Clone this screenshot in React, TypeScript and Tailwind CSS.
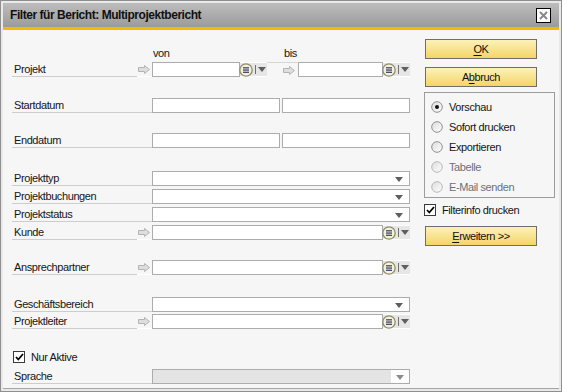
import type { ReactNode } from "react";

const Arrow = () => (
  <svg width="13" height="9" viewBox="0 0 13 9">
    <path d="M0.5 2.5H6.5V0.5L11.5 4.5L6.5 8.5V6.5H0.5Z" fill="#dedede" stroke="#b3b3b3" />
  </svg>
);

const Tri = ({ color = "#5f5f5f" }: { color?: string }) => (
  <svg width="8" height="5" viewBox="0 0 8 5">
    <path d="M0 0H8L4 5Z" fill={color} />
  </svg>
);

const ChooseIcon = () => (
  <svg width="14" height="14" viewBox="0 0 14 14">
    <circle cx="7" cy="7" r="6.2" fill="#f4f0da" stroke="#8f8b6c" strokeWidth="1.3" />
    <rect x="4" y="4.3" width="6" height="1.1" fill="#1b2a57" />
    <rect x="4" y="6.5" width="6" height="1.1" fill="#1b2a57" />
    <rect x="4" y="8.7" width="6" height="1.1" fill="#1b2a57" />
  </svg>
);

const Radio = ({ on, dim }: { on?: boolean; dim?: boolean }) => (
  <svg width="12" height="12" viewBox="0 0 12 12">
    <defs>
      <linearGradient id="rg" x1="0" y1="0" x2="1" y2="1">
        <stop offset="0" stopColor="#dcdcdc" />
        <stop offset="1" stopColor="#ffffff" />
      </linearGradient>
    </defs>
    <circle cx="6" cy="6" r="5.3" fill="url(#rg)" stroke={dim ? "#b8b8b8" : "#8f8f8f"} />
    {on && <circle cx="6" cy="6" r="2" fill="#111" />}
  </svg>
);

const Check = () => (
  <div className="w-[12px] h-[12px] border border-[#3a3a3a] bg-white flex items-center justify-center">
    <svg width="9" height="8" viewBox="0 0 9 8">
      <path d="M1 4L3.3 6.5L8 1" fill="none" stroke="#000" strokeWidth="1.8" />
    </svg>
  </div>
);

function Row({ label, arrow, children, className = "" }: { label: string; arrow?: boolean; children: ReactNode; className?: string }) {
  return (
    <div className={`flex h-[15px] ${className}`}>
      <div className="w-[125px] border-b border-[#cdcdcd] pl-[2px] flex items-center leading-none">{label}</div>
      <div className={`w-[15px] border-b flex items-center justify-center ${arrow ? "border-white" : "border-[#cdcdcd]"}`}>
        {arrow && <Arrow />}
      </div>
      <div className="flex-1 flex">{children}</div>
    </div>
  );
}

const Combo = () => (
  <div className="flex-1 bg-white border border-[#acacac] flex items-center justify-end pr-[6px] pt-[1px]">
    <Tri />
  </div>
);

const Cfl = ({ w }: { w?: string }) => (
  <div className={`flex ${w ?? "flex-1"}`}>
    <div className="flex-1 bg-white border border-[#acacac]" />
    <div className="w-[27px] bg-[#e6e6e6] border-y border-white flex items-center">
      <div className="-ml-[1px]">
        <ChooseIcon />
      </div>
      <div className="w-px h-[9px] bg-[#6f6f6f] ml-[2px]" />
      <div className="ml-[2px]">
        <Tri />
      </div>
    </div>
  </div>
);

const Btn = ({ children, className = "" }: { children: ReactNode; className?: string }) => (
  <div className={`w-[112px] h-[20px] ml-[1px] border border-[#6e6e6e] bg-gradient-to-b from-[#fdf1b8] to-[#f3d565] flex items-center justify-center text-[#111] ${className}`}>
    {children}
  </div>
);

export default function App() {
  return (
    <div className="w-[562px] h-[392px] border border-[#8f8f8f] bg-[#e9e9e9] p-[2px] font-['Liberation_Sans',Arial,sans-serif] text-[11px] tracking-[-0.4px] text-[#151515]">
      <div className="h-full flex flex-col border-b border-[#a5a5a5] bg-[#f6f6f6]">
        {/* title */}
        <div className="h-[24px] bg-gradient-to-b from-[#bdbdbd] to-[#9b9b9b] flex items-center justify-between pl-[7px] pr-[8px]">
          <span className="font-bold text-[12px] tracking-[-0.45px] text-[#111]">Filter für Bericht: Multiprojektbericht</span>
          <div className="w-[15px] h-[15px] bg-white border border-black flex items-center justify-center">
            <svg width="9" height="9" viewBox="0 0 9 9">
              <path d="M1 1L8 8M8 1L1 8" stroke="#8a8a8a" strokeWidth="2" />
            </svg>
          </div>
        </div>
        <div className="h-[3px] bg-[#f9b800]" />

        <div className="flex flex-1">
          {/* left form */}
          <div className="w-[407px] pl-[9px] flex flex-col">
            <div className="flex h-[14px] mt-[16px] leading-[14px]">
              <div className="w-[141px]" />
              <div className="w-[131px]">von</div>
              <div>bis</div>
            </div>
            <Row label="Projekt" arrow className="mt-[2px]">
              <Cfl w="w-[115px]" />
              <div className="w-[31px] border-t border-[#d6d6d6] flex items-center justify-end pr-[2px]">
                <Arrow />
              </div>
              <Cfl />
            </Row>
            <Row label="Startdatum" className="mt-[21px]">
              <div className="flex-1 bg-white border border-[#acacac]" />
              <div className="w-[2px]" />
              <div className="flex-1 bg-white border border-[#acacac]" />
            </Row>
            <Row label="Enddatum" className="mt-[20px]">
              <div className="flex-1 bg-white border border-[#acacac]" />
              <div className="w-[2px]" />
              <div className="flex-1 bg-white border border-[#acacac]" />
            </Row>
            <Row label="Projekttyp" className="mt-[23px]">
              <Combo />
            </Row>
            <Row label="Projektbuchungen" className="mt-[3px]">
              <Combo />
            </Row>
            <Row label="Projektstatus" className="mt-[3px]">
              <Combo />
            </Row>
            <Row label="Kunde" arrow className="mt-[3px]">
              <Cfl />
            </Row>
            <Row label="Ansprechpartner" arrow className="mt-[20px]">
              <Cfl />
            </Row>
            <Row label="Geschäftsbereich" className="mt-[22px]">
              <Combo />
            </Row>
            <Row label="Projektleiter" arrow className="mt-[2px]">
              <Cfl />
            </Row>
            <div className="flex items-center h-[12px] mt-[22px] ml-[1px]">
              <Check />
              <span className="ml-[6px]">Nur Aktive</span>
            </div>
            <Row label="Sprache" className="mt-[6px]">
              <div className="flex-1 bg-[#e4e4e4] border border-[#acacac] flex justify-end">
                <div className="w-[18px] bg-white flex items-center justify-center pt-[1px]">
                  <Tri color="#8c8c8c" />
                </div>
              </div>
            </Row>
          </div>

          {/* right column */}
          <div className="ml-[14px] w-[131px] flex flex-col">
            <Btn className="mt-[9px]">
              <span className="underline underline-offset-2">O</span>K
            </Btn>
            <Btn className="mt-[8px]">
              A<span className="underline underline-offset-2">b</span>bruch
            </Btn>
            <div className="mt-[5px] border border-[#9c9c9c] pt-[4px] flex flex-col">
              {[
                { t: "Vorschau", on: true },
                { t: "Sofort drucken" },
                { t: "Exportieren" },
                { t: "Tabelle", dim: true },
                { t: "E-Mail senden", dim: true },
              ].map((r) => (
                <div key={r.t} className="h-[20px] flex items-center pl-[6px]">
                  <Radio on={r.on} dim={r.dim} />
                  <span className={`ml-[6px] ${r.dim ? "text-[#6a7079]" : ""}`}>{r.t}</span>
                </div>
              ))}
            </div>
            <div className="flex items-center h-[14px] mt-[5px]">
              <Check />
              <span className="ml-[6px]">Filterinfo drucken</span>
            </div>
            <Btn className="mt-[9px]">
              <span>
                <span className="underline underline-offset-2">E</span>rweitern &gt;&gt;
              </span>
            </Btn>
          </div>
        </div>
      </div>
    </div>
  );
}
